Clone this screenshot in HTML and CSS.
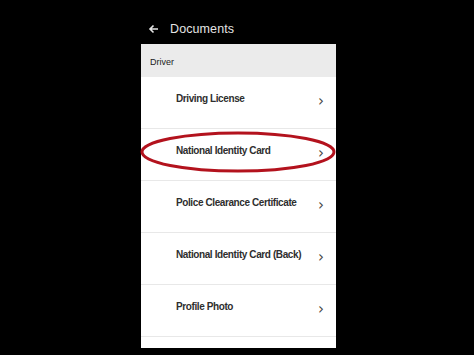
FILE: index.html
```html
<!DOCTYPE html>
<html>
<head>
<meta charset="utf-8">
<link rel="stylesheet" href="styles.css">
</head>
<body>
<div class="screen">
  <header class="topbar">
    <svg class="back" width="11" height="10" viewBox="0 0 11 10"><path d="M10 5H2M5.5 1.5L2 5l3.5 3.5" fill="none" stroke="#e6e6e6" stroke-width="1.6"/></svg>
    <span class="title">Documents</span>
  </header>
  <main class="panel">
    <div class="section">Driver</div>
    <ul class="list">
      <li class="row"><span class="label">Driving License</span><span class="chev">›</span></li>
      <li class="row highlighted"><span class="label">National Identity Card</span><span class="chev">›</span>
        <svg class="circle" width="200" height="44" viewBox="0 0 200 44"><ellipse cx="98" cy="21" rx="96" ry="19" fill="none" stroke="#b3121d" stroke-width="3"/></svg>
      </li>
      <li class="row"><span class="label">Police Clearance Certificate</span><span class="chev">›</span></li>
      <li class="row"><span class="label">National Identity Card (Back)</span><span class="chev">›</span></li>
      <li class="row"><span class="label">Profile Photo</span><span class="chev">›</span></li>
    </ul>
  </main>
</div>
</body>
</html>
```
FILE: styles.css
```css
html, body {
  margin: 0;
  padding: 0;
  background: #000;
  height: 100%;
  overflow: hidden;
}
.screen {
  width: 195px;
  margin-left: 141px;
  font-family: "Liberation Sans", Arial, sans-serif;
}
.topbar {
  height: 44px;
  display: flex;
  align-items: center;
  padding-left: 7px;
  padding-top: 13px;
  box-sizing: border-box;
}
.back {
  display: block;
}
.title {
  margin-left: 11px;
  color: #e4e4e4;
  font-size: 12.5px;
  letter-spacing: 0.1px;
}
.panel {
  background: #fff;
  height: 304px;
  display: flex;
  flex-direction: column;
}
.section {
  height: 33px;
  background: #ebebeb;
  font-size: 9px;
  color: #222;
  padding-left: 9px;
  display: flex;
  align-items: center;
  padding-top: 2px;
  box-sizing: border-box;
}
.list {
  list-style: none;
  margin: 0;
  padding: 0;
}
.row {
  position: relative;
  height: 52px;
  box-sizing: border-box;
  border-bottom: 1px solid #e8e8e8;
  display: flex;
  align-items: flex-start;
  padding-left: 35px;
  padding-right: 12px;
  padding-top: 16px;
}
.label {
  flex: 1;
  font-size: 10px;
  letter-spacing: -0.4px;
  font-weight: bold;
  color: #2e2e2e;
  white-space: nowrap;
}
.chev {
  font-family: "DejaVu Sans", sans-serif;
  font-size: 15px;
  color: #444;
  margin-top: 1px;
  line-height: 14px;
}
.circle {
  position: absolute;
  left: -1px;
  top: 2px;
}
```
